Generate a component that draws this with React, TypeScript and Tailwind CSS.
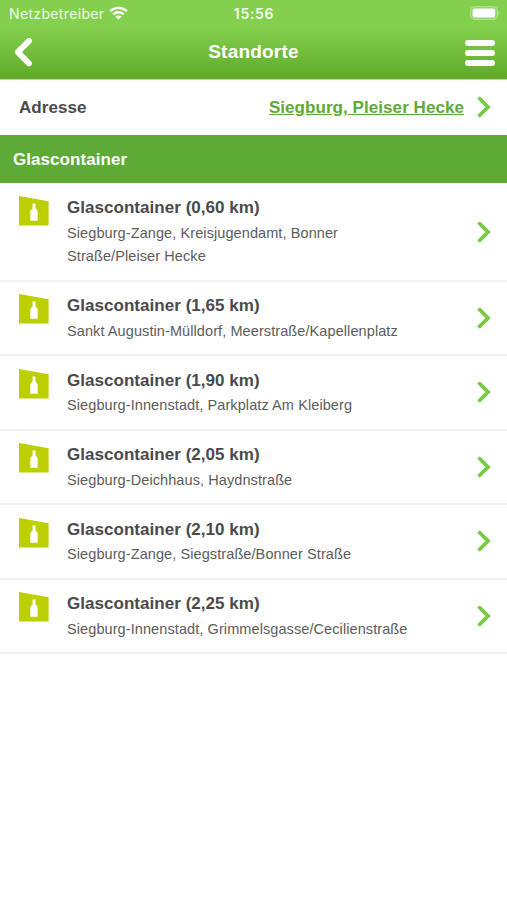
type Location = {
  distance: string;
  address: string;
};

const locations: Location[] = [
  { distance: "0,60", address: "Siegburg-Zange, Kreisjugendamt, Bonner Straße/Pleiser Hecke" },
  { distance: "1,65", address: "Sankt Augustin-Mülldorf, Meerstraße/Kapellenplatz" },
  { distance: "1,90", address: "Siegburg-Innenstadt, Parkplatz Am Kleiberg" },
  { distance: "2,05", address: "Siegburg-Deichhaus, Haydnstraße" },
  { distance: "2,10", address: "Siegburg-Zange, Siegstraße/Bonner Straße" },
  { distance: "2,25", address: "Siegburg-Innenstadt, Grimmelsgasse/Cecilienstraße" },
];

function Chevron() {
  return (
    <svg className="shrink-0" width="14" height="22" viewBox="0 0 14 22" fill="none" stroke="#7ac943" strokeWidth="3.8">
      <path d="M1.5 1.5 11 11 1.5 20.5" />
    </svg>
  );
}

function BottleIcon() {
  return (
    <svg className="shrink-0" width="30" height="30" viewBox="0 0 30 30">
      <path d="M0 0 29.6 5.2V29.4H0Z" fill="#bccf00" />
      <path d="M13.6 7.4h2.9v4.8c.3 1.4 2.2 1.6 2.2 3.6v9h-7.4v-9c0-2 2-2.2 2.3-3.6Z" fill="#fff" />
    </svg>
  );
}

function StatusBar() {
  return (
    <div className="relative flex h-[27px] items-center justify-between pl-[9px] pr-[7px] font-['Inter',sans-serif] text-sm text-white/85">
      <div className="flex items-center gap-[5px]">
        <span className="text-[14px] tracking-[0.35px]">Netzbetreiber</span>
        <svg className="-mt-0.5" width="19" height="14" viewBox="0 0 19 14" fill="none" stroke="#fff" strokeWidth="2.4">
          <path d="M1.2 5.2c4.7-4.5 11.9-4.5 16.6 0" />
          <path d="M4.3 8.4c3-2.8 7.4-2.8 10.4 0" />
          <path d="M9.5 13.6 6.3 10.5c1.8-1.5 4.6-1.5 6.4 0Z" fill="#fff" stroke="none" />
        </svg>
      </div>
      <span className="absolute left-[254px] -translate-x-1/2 font-semibold tracking-[0.7px] text-white/90">15:56</span>
      <svg className="-mt-px" width="30" height="14" viewBox="0 0 30 14">
        <rect x="0.6" y="0.6" width="26.8" height="12.8" rx="3.8" fill="#fff" fillOpacity="0.15" stroke="#fff" strokeOpacity="0.35" />
        <rect x="2.6" y="2.6" width="22.6" height="9" rx="2.2" fill="#fff" />
        <path d="M28.6 5v4c1.2-.5 1.2-3.5 0-4Z" fill="#fff" fillOpacity="0.5" />
      </svg>
    </div>
  );
}

function Header() {
  return (
    <header className="h-[79px] bg-linear-to-b from-[#83d04e] from-35% to-[#5eaa27]">
      <StatusBar />
      <div className="flex h-[51px] items-center justify-between pl-[14px] pr-3">
        <svg width="28" height="30" viewBox="0 0 28 30" fill="none" stroke="#fff" strokeWidth="5.8" strokeLinecap="round" strokeLinejoin="round">
          <path d="M15 2.9 3.8 14.1 15 25.4" />
        </svg>
        <h1 className="text-[19px] font-bold tracking-[0.2px] text-white">Standorte</h1>
        <div className="flex flex-col gap-1">
          <span className="h-1.5 w-[30px] rounded-full bg-white" />
          <span className="h-1.5 w-[30px] rounded-full bg-white" />
          <span className="h-1.5 w-[30px] rounded-full bg-white" />
        </div>
      </div>
    </header>
  );
}

function LocationRow({ distance, address }: Location) {
  return (
    <li className="flex items-center border-b-2 border-[#f1f2f2] pb-[11.5px] pl-[19px] pr-4 pt-[12.3px]">
      <div className="self-start">
        <BottleIcon />
      </div>
      <div className="ml-[18px] w-[350px]">
        <h3 className="text-[17px] font-bold leading-6 tracking-[0.04px] text-[#4a4a4a]">Glascontainer ({distance} km)</h3>
        <p className="mt-[1.5px] text-[14.5px] leading-[23.2px] tracking-[0.09px] text-[#5c5c5c]">{address}</p>
      </div>
      <div className="mb-px ml-auto">
        <Chevron />
      </div>
    </li>
  );
}

export default function App() {
  return (
    <div className="min-h-screen bg-white font-['Liberation_Sans',Arial,sans-serif]">
      <Header />
      <div className="flex h-14 items-center border-t border-[#b5df97] pl-[19px] pr-4">
        <span className="text-[17px] font-bold tracking-[0.04px] text-[#4a4a4a]">Adresse</span>
        <a href="#" className="ml-auto mr-[13px] text-[17px] font-bold tracking-[0.06px] text-[#5eaa35] underline">
          Siegburg, Pleiser Hecke
        </a>
        <div className="mb-px">
          <Chevron />
        </div>
      </div>
      <h2 className="flex h-12 items-center bg-[#5eaa37] pl-[13px] pt-px text-[17px] font-bold tracking-[0.06px] text-white">Glascontainer</h2>
      <ul className="pt-px">
        {locations.map((location) => (
          <LocationRow key={location.distance} {...location} />
        ))}
      </ul>
    </div>
  );
}
